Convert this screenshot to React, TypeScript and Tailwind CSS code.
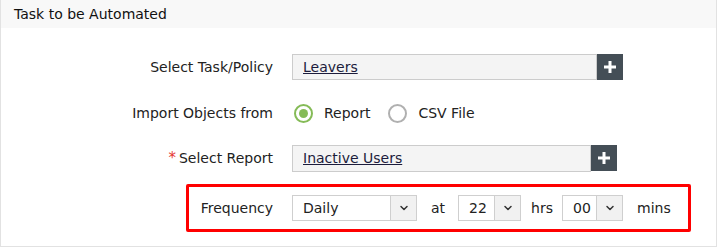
import { ChevronDown } from 'lucide-react';

const font = { fontFamily: '"DejaVu Sans", Verdana, sans-serif' };

const PlusButton = () => (
  <div className="w-[26px] h-[26px] bg-[#444e56] flex items-center justify-center shrink-0">
    <svg width="14" height="14" viewBox="0 0 14 14">
      <path d="M7 1v12M1 7h12" stroke="#ffffff" strokeWidth="3" />
    </svg>
  </div>
);

const Radio = ({ checked, label }: { checked: boolean; label: string }) => (
  <div className="flex items-center">
    <div
      className={`w-[19px] h-[19px] rounded-full border-2 flex items-center justify-center ${
        checked ? 'border-[#85bb57]' : 'border-[#b0b0b0]'
      }`}
    >
      {checked && <div className="w-[9px] h-[9px] rounded-full bg-[#85bb57]" />}
    </div>
    <span className="ml-[11px] text-[14px] text-[#222]">{label}</span>
  </div>
);

const Select = ({ value, width }: { value: string; width: string }) => (
  <div className={`flex h-[26px] border border-[#cfcfcf] bg-white ${width}`}>
    <div className="flex-1 flex items-center pl-[10px] text-[14px] text-[#222]">{value}</div>
    <div className="w-[26px] bg-[#f1f1f1] border-l border-[#cfcfcf] flex items-center justify-center">
      <ChevronDown size={12} strokeWidth={3} color="#333" />
    </div>
  </div>
);

export default function App() {
  return (
    <div className="w-[717px] h-[251px] bg-white" style={font}>
      <div className="border-x border-b border-[#e2e2e2] h-[247px]">
        <div className="h-[28px] bg-[#f8f8f8] flex items-center pl-[13px] text-[14px] text-[#111]">
          Task to be Automated
        </div>

        <div className="pt-[26px] flex flex-col">
          <div className="flex items-center h-[26px]">
            <div className="w-[272px] text-right text-[14px] text-[#222]">Select Task/Policy</div>
            <div className="ml-[19px] flex">
              <div className="w-[305px] h-[26px] bg-[#f4f4f4] border border-[#cccccc] flex items-center pl-[10px] text-[14px] text-[#1c1c3c] underline">
                Leavers
              </div>
              <PlusButton />
            </div>
          </div>

          <div className="flex items-center h-[26px] mt-[20px]">
            <div className="w-[272px] text-right text-[14px] text-[#222]">Import Objects from</div>
            <div className="ml-[21px] flex items-center gap-[18px]">
              <Radio checked label="Report" />
              <Radio checked={false} label="CSV File" />
            </div>
          </div>

          <div className="flex items-center h-[27px] mt-[19px]">
            <div className="w-[272px] text-right text-[14px] text-[#222]">
              <span className="text-[#e53935] text-[15px] mr-[3px]">*</span>Select Report
            </div>
            <div className="ml-[19px] flex">
              <div className="w-[299px] h-[27px] bg-[#f4f4f4] border border-[#cccccc] flex items-center pl-[10px] text-[14px] text-[#1c1c3c] underline">
                Inactive Users
              </div>
              <div className="h-[27px]">
                <PlusButton />
              </div>
            </div>
          </div>

          <div className="ml-[185px] mt-[12px] w-[505px] h-[48px] border-[3px] border-[#ff0000] rounded-[2px] flex items-center">
            <div className="w-[84px] text-right text-[14px] text-[#222]">Frequency</div>
            <div className="ml-[19px]">
              <Select value="Daily" width="w-[125px]" />
            </div>
            <span className="ml-[14px] text-[14px] text-[#222]">at</span>
            <div className="ml-[13px]">
              <Select value="22" width="w-[63px]" />
            </div>
            <span className="ml-[10px] text-[14px] text-[#222]">hrs</span>
            <div className="ml-[9px]">
              <Select value="00" width="w-[61px]" />
            </div>
            <span className="ml-[14px] text-[14px] text-[#222]">mins</span>
          </div>
        </div>
      </div>
    </div>
  );
}
